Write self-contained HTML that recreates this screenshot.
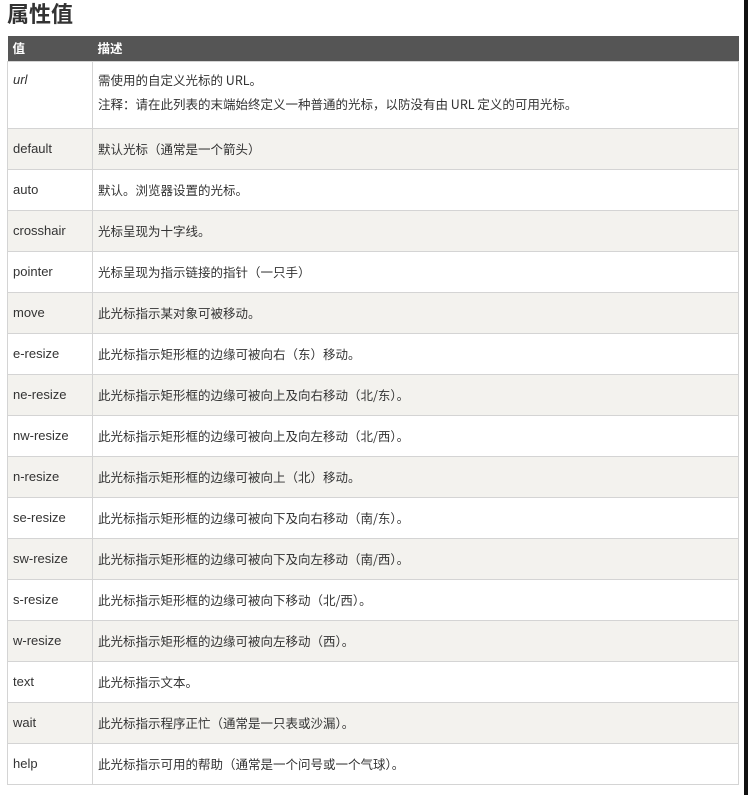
<!DOCTYPE html>
<html><head><meta charset="utf-8"><style>
html,body{margin:0;padding:0;background:#fff;width:748px;height:795px;overflow:hidden;position:relative}
body{font-family:"Liberation Sans","Noto Sans CJK SC",sans-serif;color:#333}
h2{position:absolute;left:7px;top:0;margin:0;font-size:22px;font-weight:bold;line-height:30px;color:#333}
.bar{position:absolute;right:0;top:0;width:4px;height:795px;background:#111}
table{position:absolute;left:7px;top:36px;width:732px;border-collapse:collapse;font-size:13px;line-height:16px}
th{background:#555;color:#fff;text-align:left;height:25px;padding:0 0 0 5px;font-size:12.5px;font-weight:bold}
td{border:1px solid #d4d4d4;height:40px;padding:0 0 0 5px;vertical-align:middle}
td:first-child{width:79px}
td+td{font-family:"Noto Sans CJK SC",sans-serif;font-size:12.5px}
tr:nth-child(odd) td{background:#f3f2ee}
tr.u td{height:66px;vertical-align:top;background:#fff}
tr.u p{margin:10px 0 0;line-height:16px}
tr.u p+p{margin-top:8px}
</style></head><body>
<h2>属性值</h2>
<div class="bar"></div>
<table>
<tr><th style="width:79px">值</th><th>描述</th></tr>
<tr class="u"><td><p><i>url</i></p></td><td><p>需使用的自定义光标的 URL。</p><p>注释：请在此列表的末端始终定义一种普通的光标，以防没有由 URL 定义的可用光标。</p></td></tr>
<tr><td>default</td><td>默认光标（通常是一个箭头）</td></tr>
<tr><td>auto</td><td>默认。浏览器设置的光标。</td></tr>
<tr><td>crosshair</td><td>光标呈现为十字线。</td></tr>
<tr><td>pointer</td><td>光标呈现为指示链接的指针（一只手）</td></tr>
<tr><td>move</td><td>此光标指示某对象可被移动。</td></tr>
<tr><td>e-resize</td><td>此光标指示矩形框的边缘可被向右（东）移动。</td></tr>
<tr><td>ne-resize</td><td>此光标指示矩形框的边缘可被向上及向右移动（北/东）。</td></tr>
<tr><td>nw-resize</td><td>此光标指示矩形框的边缘可被向上及向左移动（北/西）。</td></tr>
<tr><td>n-resize</td><td>此光标指示矩形框的边缘可被向上（北）移动。</td></tr>
<tr><td>se-resize</td><td>此光标指示矩形框的边缘可被向下及向右移动（南/东）。</td></tr>
<tr><td>sw-resize</td><td>此光标指示矩形框的边缘可被向下及向左移动（南/西）。</td></tr>
<tr><td>s-resize</td><td>此光标指示矩形框的边缘可被向下移动（北/西）。</td></tr>
<tr><td>w-resize</td><td>此光标指示矩形框的边缘可被向左移动（西）。</td></tr>
<tr><td>text</td><td>此光标指示文本。</td></tr>
<tr><td>wait</td><td>此光标指示程序正忙（通常是一只表或沙漏）。</td></tr>
<tr><td>help</td><td>此光标指示可用的帮助（通常是一个问号或一个气球）。</td></tr>
</table>
</body></html>
